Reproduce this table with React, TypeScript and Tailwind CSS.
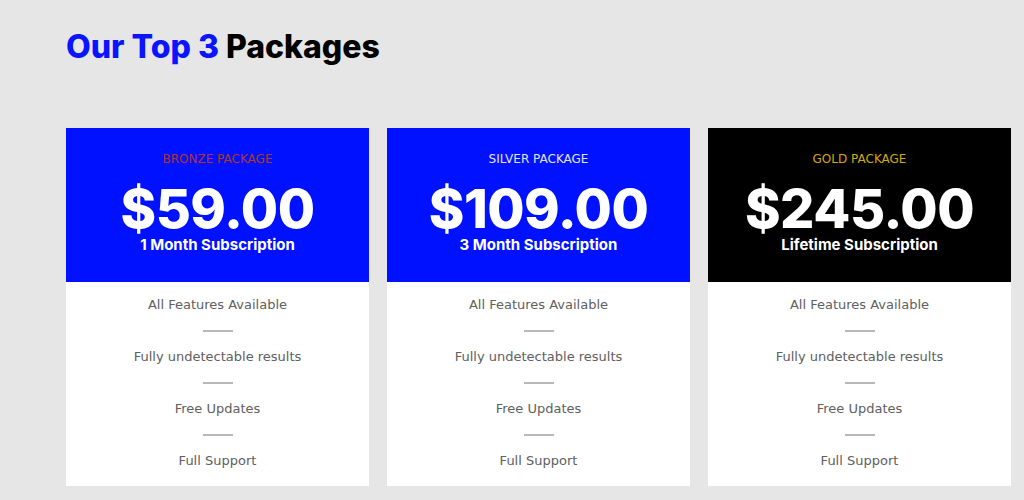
import React from 'react';

interface Pkg {
  label: string;
  labelColor: string;
  price: string;
  term: string;
  bg: string;
}

const packages: Pkg[] = [
  { label: 'BRONZE PACKAGE', labelColor: 'text-[#b0342c]', price: '$59.00', term: '1 Month Subscription', bg: 'bg-[#0011ff]' },
  { label: 'SILVER PACKAGE', labelColor: 'text-[#e4e4e4]', price: '$109.00', term: '3 Month Subscription', bg: 'bg-[#0011ff]' },
  { label: 'GOLD PACKAGE', labelColor: 'text-[#d4a80a]', price: '$245.00', term: 'Lifetime Subscription', bg: 'bg-black' },
];

const features = ['All Features Available', 'Fully undetectable results', 'Free Updates', 'Full Support'];

const heading = { fontFamily: 'Inter, "Noto Sans", sans-serif' };
const body = { fontFamily: '"DejaVu Sans", "Noto Sans", sans-serif' };

function PackageCard({ pkg }: { pkg: Pkg }) {
  return (
    <div className="flex flex-col">
      <div className={`${pkg.bg} h-[154px] flex flex-col items-center text-white`}>
        <div className={`mt-[23px] text-[12px] leading-[16px] ${pkg.labelColor}`} style={body}>
          {pkg.label}
        </div>
        <div className="mt-[15px] text-[54px] leading-[54px] font-extrabold tracking-[-0.5px]" style={heading}>
          {pkg.price}
        </div>
        <div className="text-[15px] leading-[17px] font-bold" style={heading}>
          {pkg.term}
        </div>
      </div>
      <div className="bg-white h-[204px] flex flex-col items-center pt-[11px] text-[13px] text-[#606060]" style={body}>
        {features.map((f, i) => (
          <React.Fragment key={f}>
            {i > 0 && <div className="my-[13px] h-[2px] w-[30px] bg-[#b8b8b8]" />}
            <div className="leading-[24px]">{f}</div>
          </React.Fragment>
        ))}
      </div>
    </div>
  );
}

export default function App() {
  return (
    <div className="min-h-[500px] w-full bg-[#e6e6e6] pl-[66px] pt-[27px]">
      <h2 className="text-[32px] leading-[40px] font-extrabold" style={heading}>
        <span className="text-[#0a14ff]">Our Top 3 </span>
        <span className="text-black">Packages</span>
      </h2>
      <div className="mt-[61px] grid grid-cols-3 gap-[18px] w-[945px]">
        {packages.map((p) => (
          <PackageCard key={p.label} pkg={p} />
        ))}
      </div>
    </div>
  );
}
